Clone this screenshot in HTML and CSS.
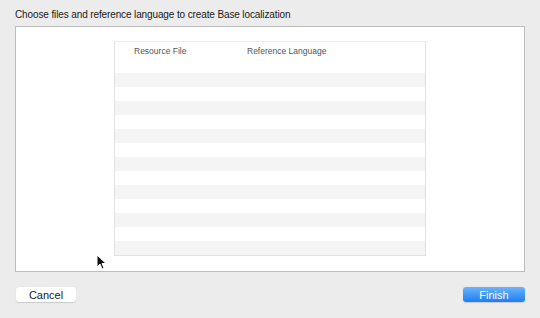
FILE: index.html
```html
<!DOCTYPE html>
<html lang="en">
<head>
    <meta charset="UTF-8">
    <title>Base Localization</title>
    <link rel="stylesheet" href="styles.css">
</head>
<body>
    <div class="sheet">
        <h1 class="title">Choose files and reference language to create Base localization</h1>

        <div class="panel">
            <div class="table">
                <div class="table-head">
                    <span class="col-file">Resource File</span>
                    <span class="col-lang">Reference Language</span>
                </div>
                <div class="row"></div>
                <div class="row alt"></div>
                <div class="row"></div>
                <div class="row alt"></div>
                <div class="row"></div>
                <div class="row alt"></div>
                <div class="row"></div>
                <div class="row alt"></div>
                <div class="row"></div>
                <div class="row alt"></div>
                <div class="row"></div>
                <div class="row alt"></div>
                <div class="row"></div>
                <div class="row alt"></div>
            </div>
        </div>

        <footer class="actions">
            <button class="btn">Cancel</button>
            <button class="btn primary">Finish</button>
        </footer>
    </div>

    <svg class="cursor" width="11" height="16" viewBox="0 0 11 16">
        <path d="M1 1 L1 13 L4 10 L6 15 L8 14 L6 9.5 L10 9.5 Z" fill="#111" stroke="#fff" stroke-width="1"/>
    </svg>
</body>
</html>
```

FILE: styles.css
```css
* {
    margin: 0;
    padding: 0;
    box-sizing: border-box;
}

body {
    background: #ececec;
    font-family: "Liberation Sans", Arial, sans-serif;
    color: #222;
    width: 540px;
    height: 318px;
    overflow: hidden;
}

.sheet {
    padding: 8px 15px 0 15px;
}

.title {
    font-size: 10px;
    font-weight: 400;
    line-height: 13px;
    letter-spacing: -0.12px;
    color: #1a1a1a;
    margin-bottom: 5px;
}

.panel {
    background: #fff;
    border: 1px solid #bdbdbd;
    height: 246px;
    padding: 14px 0 0 98px;
}

.table {
    width: 312px;
    border: 1px solid #e2e2e2;
    border-top-color: #ececec;
}

.table-head {
    height: 17px;
    display: flex;
    align-items: center;
    font-size: 8.5px;
    color: #555;
    padding-left: 19px;
}

.col-file {
    width: 113px;
}

.row {
    height: 14px;
}

.row.alt {
    background: #f4f4f4;
}

.actions {
    display: flex;
    justify-content: space-between;
    padding: 15px 0 0 1px;
}

.btn {
    font-family: "Liberation Sans", Arial, sans-serif;
    font-size: 11px;
    height: 15px;
    width: 60px;
    border: none;
    border-radius: 3px;
    background: #fff;
    color: #222;
    box-shadow: 0 0.5px 1px rgba(0, 0, 0, 0.15);
}

.btn.primary {
    width: 62px;
    color: #fff;
    background: linear-gradient(#6cb3fa, #1d7ff2);
}

.cursor {
    position: absolute;
    left: 96px;
    top: 254px;
}
```
